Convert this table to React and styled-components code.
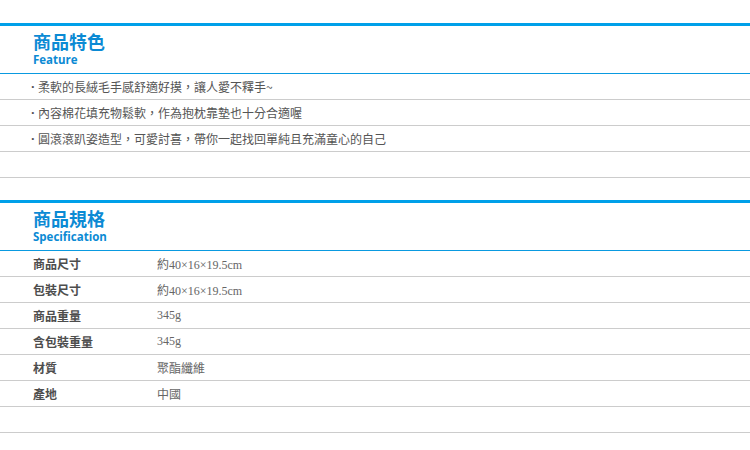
import styled, { createGlobalStyle } from "styled-components";

const Global = createGlobalStyle`
  body {
    margin: 0;
    background: #fff;
    font-family: "Noto Sans CJK TC", "Noto Sans", sans-serif;
  }
`;

const Page = styled.div`
  width: 750px;
  padding-top: 23px;
  display: flex;
  flex-direction: column;
  gap: 22px;
`;

const Section = styled.section`
  border-top: 3px solid #00a0e9;
`;

const Header = styled.div`
  height: 48px;
  box-sizing: border-box;
  padding: 5px 0 0 33px;
  border-bottom: 1px solid #0a9ae0;
  display: flex;
  flex-direction: column;
`;

const Title = styled.h2`
  margin: 0;
  font-size: 18px;
  line-height: 20px;
  font-weight: 700;
  color: #0b8ad4;
  font-family: "Noto Sans CJK TC", sans-serif;
`;

const Sub = styled.div`
  margin-top: 2px;
  font-family: "Open Sans", "Noto Sans", sans-serif;
  font-size: 11.5px;
  line-height: 14px;
  font-weight: 700;
  color: #0b8ad4;
`;

const Row = styled.div`
  height: 26px;
  box-sizing: border-box;
  border-bottom: 1px solid #cccccc;
  display: flex;
  align-items: center;
  padding-left: ${(p) => (p.$bullet ? "31px" : "33px")};
  font-size: 12px;
  color: #555;
`;

const Bullet = styled.span`
  width: 7px;
  flex: none;
  font-family: "Liberation Sans", sans-serif;
  font-size: 13px;
  font-weight: 700;
  line-height: 12px;
  color: #555;
`;

const Label = styled.span`
  width: 124px;
  font-weight: 700;
  color: #4d4d4d;
`;

const Value = styled.span`
  font-family: "Liberation Serif", "Noto Sans CJK TC", serif;
  color: #666;
`;

const features = [
  "柔軟的長絨毛手感舒適好摸，讓人愛不釋手~",
  "內容棉花填充物鬆軟，作為抱枕靠墊也十分合適喔",
  "圓滾滾趴姿造型，可愛討喜，帶你一起找回單純且充滿童心的自己",
];

const specs = [
  ["商品尺寸", "約40×16×19.5cm"],
  ["包裝尺寸", "約40×16×19.5cm"],
  ["商品重量", "345g"],
  ["含包裝重量", "345g"],
  ["材質", "聚酯纖維"],
  ["產地", "中國"],
];

export default function App() {
  return (
    <>
      <Global />
      <Page>
        <Section>
          <Header>
            <Title>商品特色</Title>
            <Sub>Feature</Sub>
          </Header>
          {features.map((f) => (
            <Row key={f} $bullet>
              <Bullet>·</Bullet>
              <span>{f}</span>
            </Row>
          ))}
          <Row />
        </Section>
        <Section>
          <Header>
            <Title>商品規格</Title>
            <Sub>Specification</Sub>
          </Header>
          {specs.map(([k, v]) => (
            <Row key={k}>
              <Label>{k}</Label>
              <Value>{v}</Value>
            </Row>
          ))}
          <Row />
        </Section>
      </Page>
    </>
  );
}
